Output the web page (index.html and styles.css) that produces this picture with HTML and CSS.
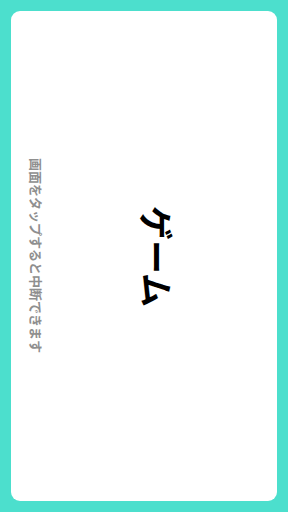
FILE: index.html
```html
<!DOCTYPE html>
<html lang="ja">
<head>
    <meta charset="UTF-8">
    <meta name="viewport" content="width=device-width, initial-scale=1.0">
    <title>ゲーム</title>
    <link rel="stylesheet" href="styles.css">
</head>
<body>
    <div class="screen">
        <div class="card">
            <p class="hint">画面をタップすると中断できます</p>
            <div class="title-wrap">
                <h1 class="title">ゲーム</h1>
            </div>
        </div>
    </div>
</body>
</html>
```

FILE: styles.css
```css
html, body {
    margin: 0;
    padding: 0;
}

body {
    font-family: "Noto Sans CJK JP", "Noto Sans", sans-serif;
    background-color: #4cdfcd;
}

.screen {
    width: 288px;
    height: 512px;
    padding: 11px;
    box-sizing: border-box;
}

.card {
    height: 100%;
    background: #fff;
    border-radius: 9px;
    display: flex;
    align-items: center;
    padding-left: 17px;
}

/* landscape content, glyphs turned sideways */
.hint,
.title {
    writing-mode: vertical-rl;
    text-orientation: sideways;
    margin: 0;
}

.hint {
    font-size: 13px;
    line-height: 16px;
    font-weight: 700;
    color: #8f8f8f;
}

.title-wrap {
    flex: 1;
    display: flex;
    justify-content: center;
    padding-right: 8px;
}

.title {
    font-size: 34px;
    line-height: 40px;
    font-weight: 700;
    color: #000;
}
```
